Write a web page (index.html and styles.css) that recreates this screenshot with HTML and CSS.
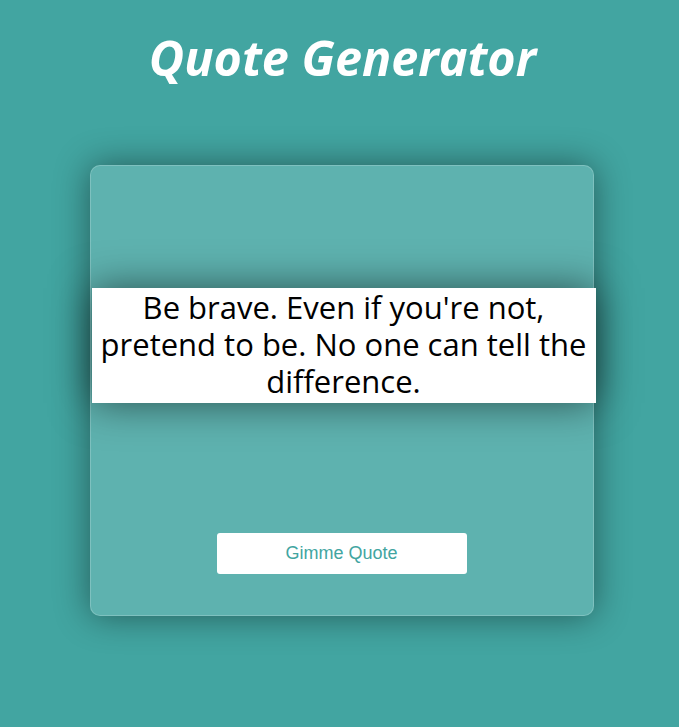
FILE: index.html
```html
<!DOCTYPE html>
<html>
<head>
<meta charset="utf-8">
<link rel="stylesheet" href="styles.css">
</head>
<body>
  <h1 class="title">Quote Generator</h1>
  <div class="card">
    <div class="quote">Be brave. Even if you're not, pretend to be. No one can tell the difference.</div>
    <button class="btn">Gimme Quote</button>
  </div>
</body>
</html>
```
FILE: styles.css
```css
html, body {
  margin: 0;
  padding: 0;
}
body {
  background: #42a5a1;
  min-height: 727px;
  font-family: "Open Sans", "Noto Sans", sans-serif;
  display: flex;
  flex-direction: column;
  align-items: center;
}
.title {
  margin: 24px 0 0 6px;
  font-size: 48.5px;
  font-weight: 700;
  font-style: italic;
  color: #ffffff;
  line-height: 66px;
}
.card {
  margin: 75px 0 0 4px;
  box-sizing: border-box;
  width: 504px;
  height: 451px;
  border: 1px solid rgba(255, 255, 255, 0.2);
  border-radius: 10px;
  background: rgba(255, 255, 255, 0.15);
  box-shadow: 0 0 35px rgba(0, 0, 0, 0.45);
  display: flex;
  flex-direction: column;
  align-items: center;
  padding-top: 122px;
}
.quote {
  align-self: flex-start;
  margin-left: 1px;
  width: 504px;
  flex: none;
  box-sizing: border-box;
  background: #ffffff;
  color: #000000;
  font-size: 31px;
  line-height: 37px;
  text-align: center;
  padding: 1px 4px 3px;
  box-shadow: 0 0 40px rgba(0, 0, 0, 0.55);
}
.btn {
  margin-top: 130px;
  width: 250px;
  height: 41px;
  border: none;
  border-radius: 3px;
  background: #ffffff;
  color: #42a5a1;
  font-family: "Liberation Sans", Arial, sans-serif;
  font-size: 18px;
  cursor: pointer;
}
```
